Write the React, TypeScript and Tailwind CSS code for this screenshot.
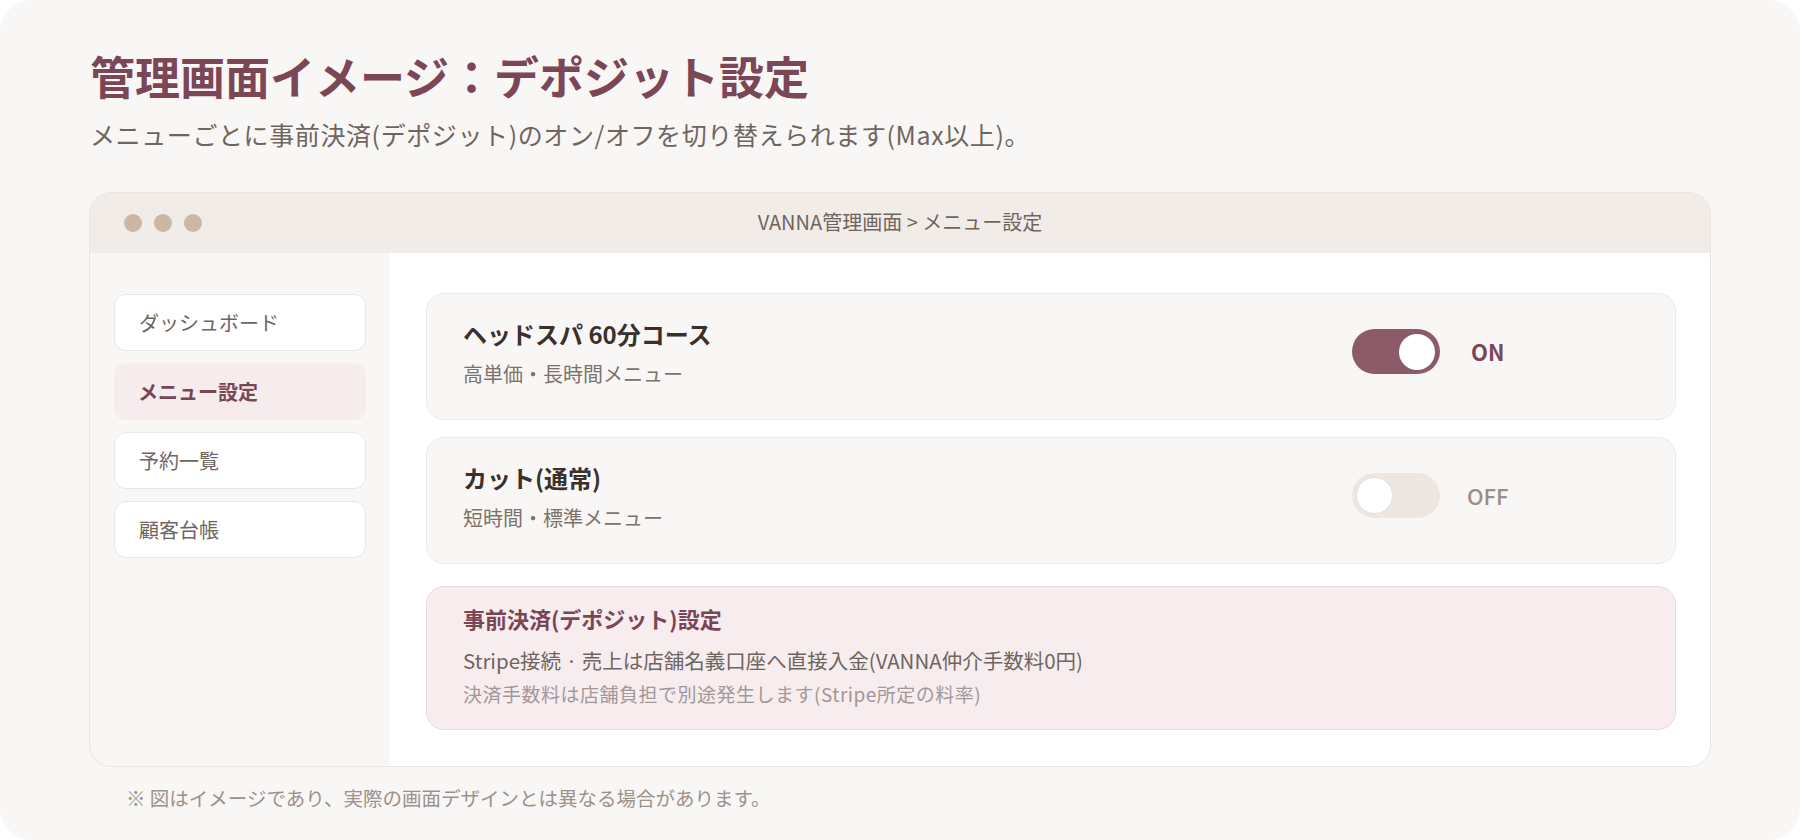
const sans = { fontFamily: '"Noto Sans CJK JP", "Noto Sans", sans-serif' };

const navItems = [
  { label: "ダッシュボード", active: false },
  { label: "メニュー設定", active: true },
  { label: "予約一覧", active: false },
  { label: "顧客台帳", active: false },
];

const menus = [
  { title: "ヘッドスパ 60分コース", sub: "高単価・長時間メニュー", on: true },
  { title: "カット(通常)", sub: "短時間・標準メニュー", on: false },
];

const Toggle = ({ on }: { on: boolean }) => {
  return (
    <div className="flex items-center gap-[31px] mb-[10px]">
      {on ? (
        <div className="w-[88px] h-[45px] rounded-full bg-[#8c5b69] flex items-center justify-end px-[5px]">
          <div className="w-[36px] h-[36px] rounded-full bg-white" />
        </div>
      ) : (
        <div className="w-[88px] h-[45px] rounded-full bg-[#ede6e1] flex items-center justify-start px-[4px]">
          <div className="w-[37px] h-[37px] rounded-full bg-white border border-[#e8dfd9]" />
        </div>
      )}
      <div
        className={
          on
            ? "w-[60px] text-[22px] font-semibold text-[#7a4656]"
            : "w-[60px] -ml-[4px] mr-[4px] text-[22px] font-medium text-[#9b8e87]"
        }
      >
        {on ? "ON" : "OFF"}
      </div>
    </div>
  );
};

export default function App() {
  return (
    <div className="bg-white" style={sans}>
      <div className="h-[840px] rounded-[32px] bg-[#f9f7f5] px-[89px] pt-[47px]">
        <h1 className="text-[45px] leading-[58px] font-bold text-[#7b4656] pl-[1px]">
          管理画面イメージ：デポジット設定
        </h1>
        <p className="mt-[12px] text-[25px] leading-[34px] tracking-[0.6px] text-[#6f6560] pl-[1px]">
          メニューごとに事前決済(デポジット)のオン/オフを切り替えられます(Max以上)。
        </p>

        <div className="mt-[41px] rounded-[22px] border border-[#ece4df] overflow-hidden">
          <div className="h-[60px] bg-[#f2ece8] grid grid-cols-[1fr_auto_1fr] items-center px-[34px]">
            <div className="flex gap-[12px]">
              <div className="w-[18px] h-[18px] rounded-full bg-[#cbb7a3]" />
              <div className="w-[18px] h-[18px] rounded-full bg-[#cbb7a3]" />
              <div className="w-[18px] h-[18px] rounded-full bg-[#cbb7a3]" />
            </div>
            <div className="text-[20px] text-[#6f6560] -mt-[2px]">VANNA管理画面 &gt; メニュー設定</div>
            <div />
          </div>

          <div className="flex">
            <div className="w-[300px] bg-[#f9f7f5] px-[24px] pt-[41px] flex flex-col gap-[12px]">
              {navItems.map((item) =>
                item.active ? (
                  <div
                    key={item.label}
                    className="h-[57px] rounded-[12px] bg-[#f6eced] flex items-center px-[24px] text-[20px] font-bold text-[#7a4656]"
                  >
                    {item.label}
                  </div>
                ) : (
                  <div
                    key={item.label}
                    className="h-[57px] rounded-[12px] bg-white border border-[#eee6e1] flex items-center px-[24px] text-[20px] text-[#6f6560]"
                  >
                    {item.label}
                  </div>
                )
              )}
            </div>

            <div className="flex-1 bg-white pl-[36px] pr-[34px] pt-[40px] pb-[36px]">
              <div className="flex flex-col gap-[17px]">
                {menus.map((m) => (
                  <div
                    key={m.title}
                    className="h-[127px] rounded-[18px] border border-[#eee7e2] bg-[#f9f7f5] flex items-center justify-between pl-[36px] pr-[144px]"
                  >
                    <div className="mb-[8px]">
                      <div className="text-[24px] leading-[32px] font-bold text-[#3a302c]">{m.title}</div>
                      <div className="mt-[10px] text-[20px] leading-[28px] text-[#7d716b]">{m.sub}</div>
                    </div>
                    <Toggle on={m.on} />
                  </div>
                ))}
              </div>

              <div className="mt-[22px] rounded-[18px] border border-[#ead8dc] bg-[#f7edee] px-[36px] pt-[16px] pb-[22px]">
                <div className="text-[22px] leading-[30px] font-bold text-[#7a4656]">
                  事前決済(デポジット)設定
                </div>
                <div className="mt-[13px] text-[20.5px] leading-[28px] text-[#6f6560]">
                  Stripe接続 · 売上は店舗名義口座へ直接入金(VANNA仲介手数料0円)
                </div>
                <div className="mt-[7px] text-[19px] leading-[26px] tracking-[0.5px] text-[#a3979a]">
                  決済手数料は店舗負担で別途発生します(Stripe所定の料率)
                </div>
              </div>
            </div>
          </div>
        </div>

        <p className="mt-[17px] pl-[37px] text-[19.5px] leading-[28px] text-[#9c918b]">
          ※ 図はイメージであり、実際の画面デザインとは異なる場合があります。
        </p>
      </div>
    </div>
  );
}
